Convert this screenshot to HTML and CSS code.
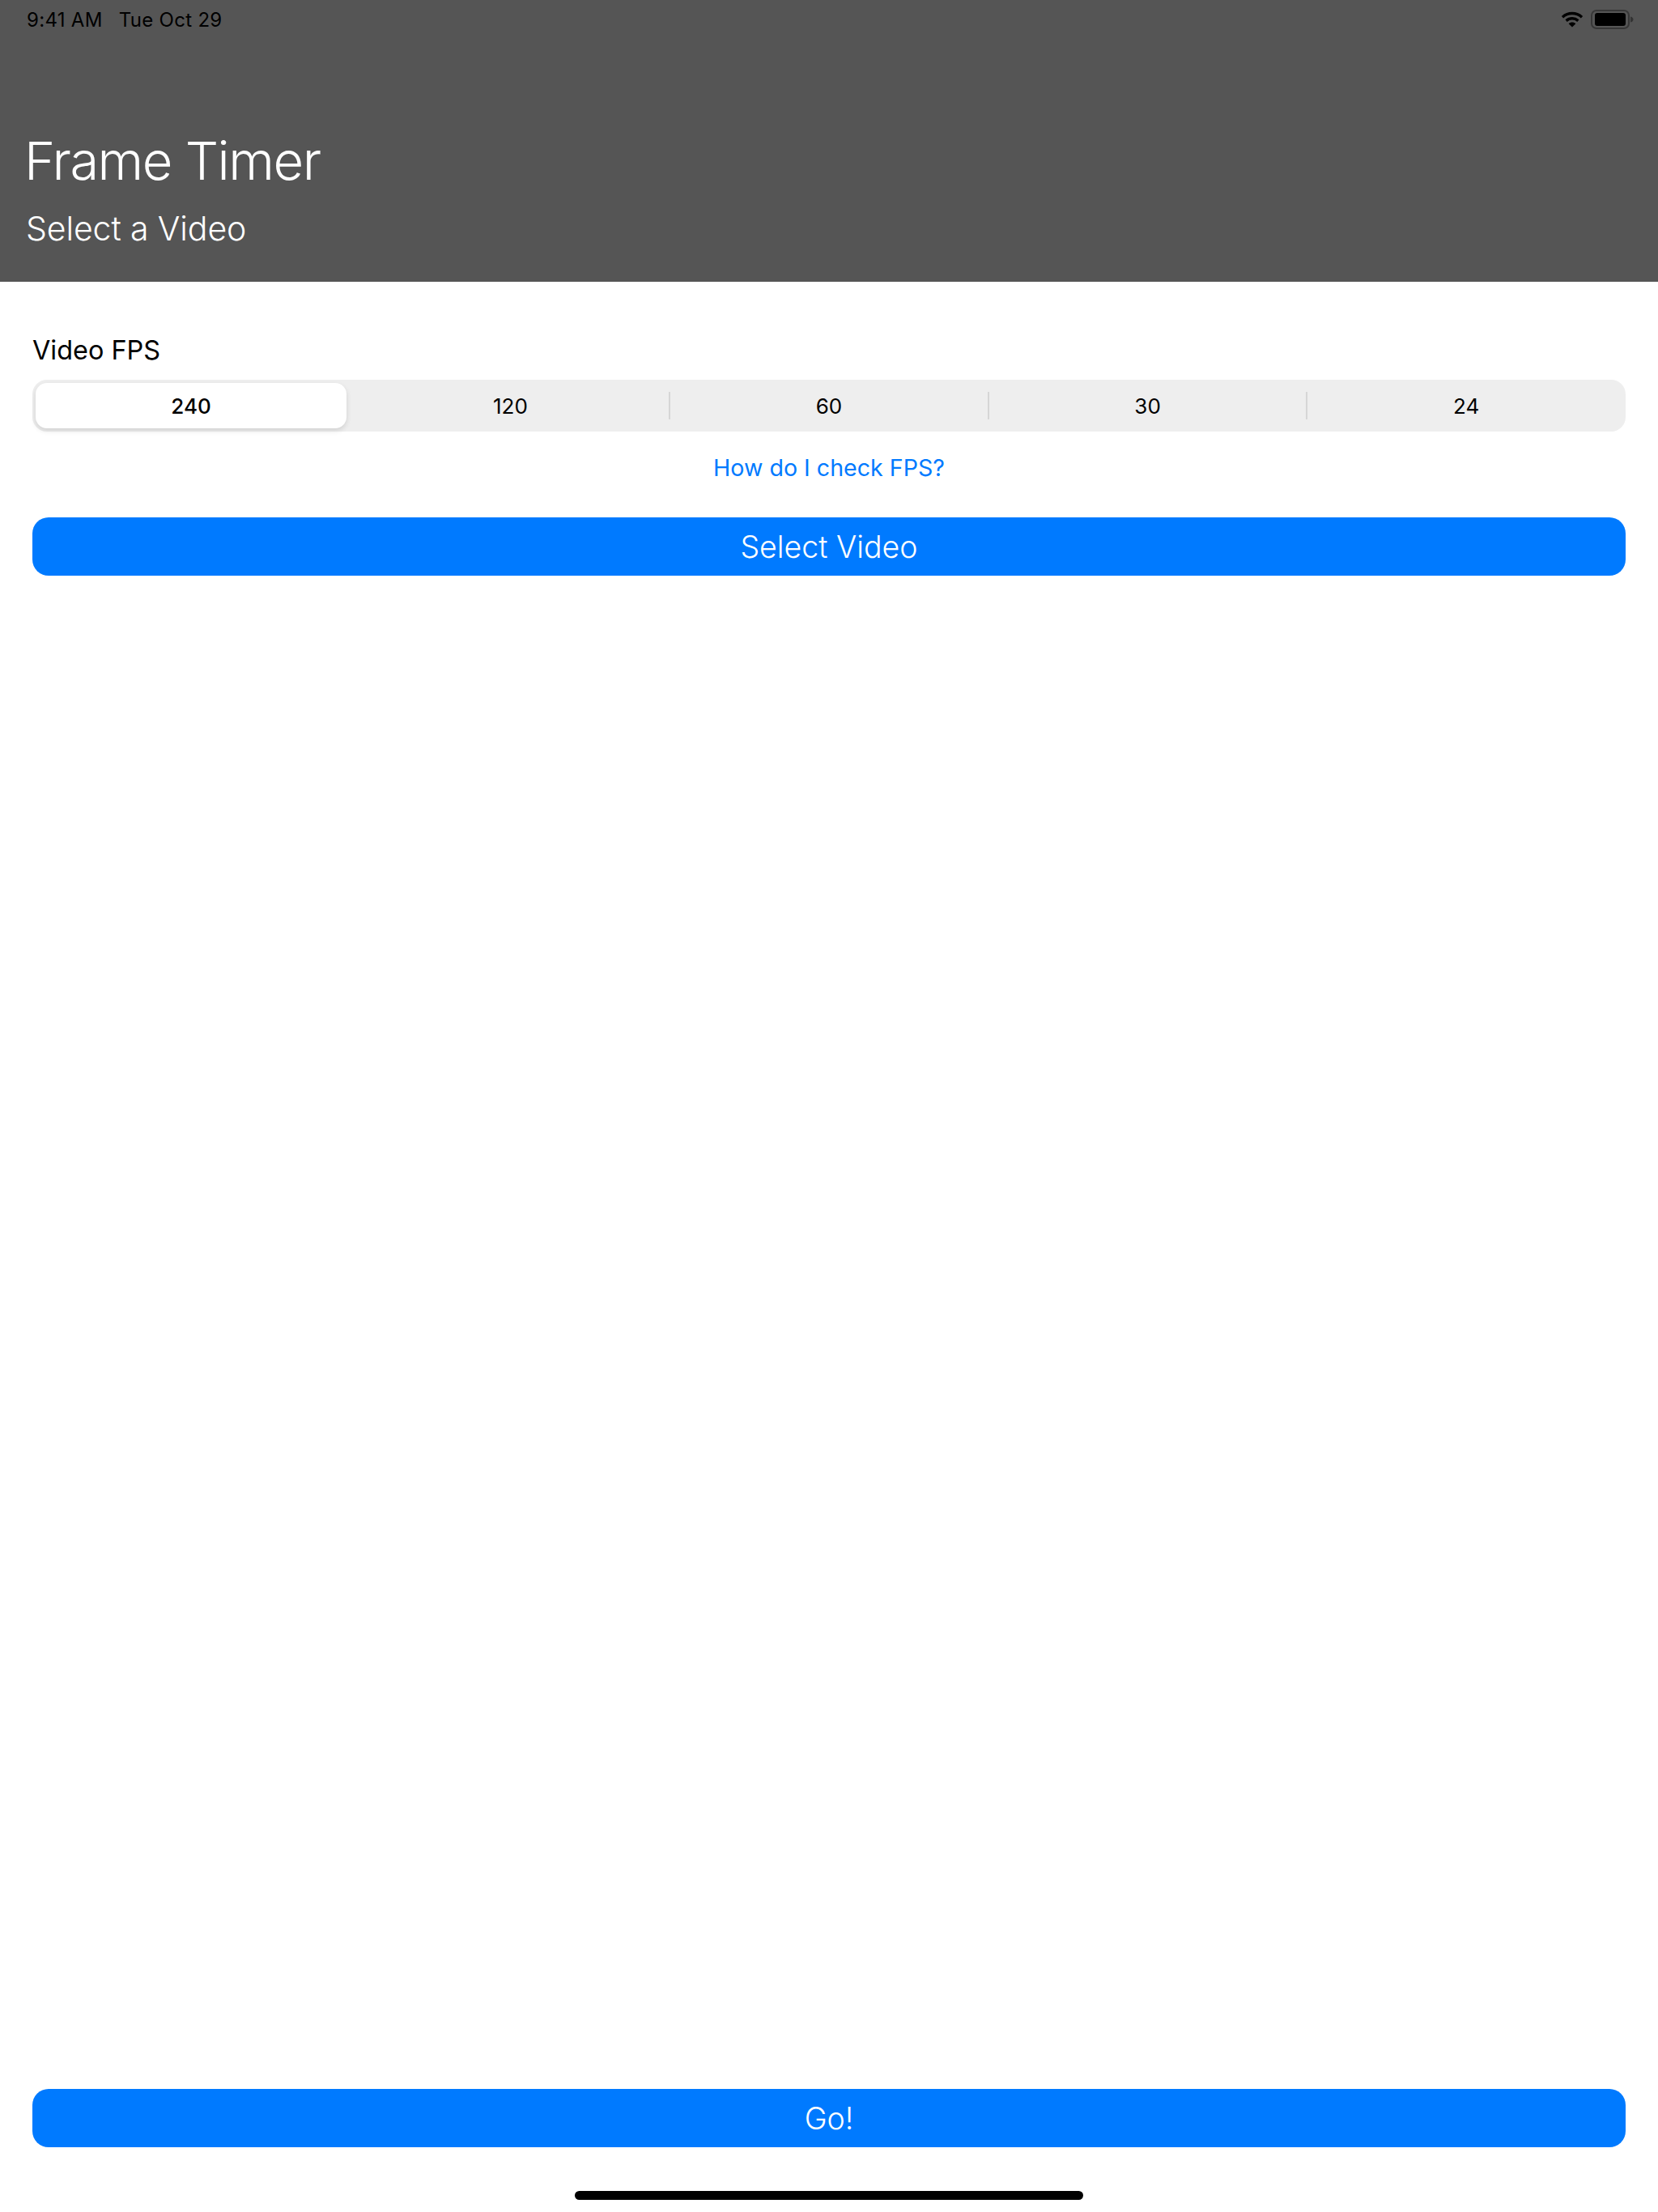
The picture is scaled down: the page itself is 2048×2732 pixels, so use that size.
FILE: index.html
```html
<!DOCTYPE html>
<html lang="en">
<head>
  <meta charset="UTF-8">
  <meta name="viewport" content="width=device-width, initial-scale=1.0">
  <title>Frame Timer</title>
  <link rel="stylesheet" href="styles.css">
</head>
<body>
  <div class="page">
    <header class="top-bar">
      <div class="status-bar">
        <span class="status-time">9:41 AM</span>
        <span class="status-date">Tue Oct 29</span>
        <div class="status-icons">
          <svg class="wifi-icon" width="28" height="20" viewBox="0 0 28 20">
            <path d="M2 7.2C9 1 19 1 26 7.2" fill="none" stroke="#000" stroke-width="3.4"/>
            <path d="M6.6 11.6C11 7.8 17 7.8 21.4 11.6" fill="none" stroke="#000" stroke-width="3.4"/>
            <path d="M9.6 15.2C12 13 16 13 18.4 15.2L14 19.6Z" fill="#000"/>
          </svg>
          <svg class="battery-icon" width="54" height="24" viewBox="0 0 54 24">
            <rect x="1" y="1" width="46" height="22" rx="6" fill="none" stroke="#000" stroke-opacity="0.35" stroke-width="2"/>
            <rect x="5" y="4" width="38" height="16" rx="3" fill="#000"/>
            <path d="M49 8.5C51.5 9 52.5 10.5 52.5 12C52.5 13.500 51.5 15 49 15.500Z" fill="#000" fill-opacity="0.4"/>
          </svg>
        </div>
      </div>
      <h1 class="app-title">Frame Timer</h1>
      <h2 class="app-subtitle">Select a Video</h2>
    </header>

    <main class="content">
      <label class="field-label">Video FPS</label>
      <div class="segments">
        <div class="segment selected">240</div>
        <div class="segment">120</div>
        <div class="segment divided">60</div>
        <div class="segment divided">30</div>
        <div class="segment divided">24</div>
      </div>
      <a class="help-link" href="#">How do I check FPS?</a>
      <button class="primary-btn">Select Video</button>
    </main>

    <footer class="bottom">
      <button class="primary-btn">Go!</button>
      <div class="home-bar"></div>
    </footer>
  </div>
</body>
</html>
```
FILE: styles.css
```css
* {
  margin: 0;
  padding: 0;
  box-sizing: border-box;
  font-family: 'Inter', 'Liberation Sans', sans-serif;
}

body {
  background-color: #fff;
  color: #000;
}

.page {
  display: flex;
  flex-direction: column;
  height: 2732px;
}

.top-bar {
  height: 348px;
  background-color: #555;
  color: #fff;
  padding: 0 33px;
}

.status-bar {
  display: flex;
  align-items: center;
  height: 48px;
  color: #000;
  font-size: 24px;
  letter-spacing: 0.3px;
}

.status-date {
  margin-left: 20px;
}

.status-icons {
  display: flex;
  align-items: center;
  gap: 9px;
  margin-left: auto;
  margin-right: -4px;
}

.wifi-icon,
.battery-icon {
  display: block;
}

.app-title {
  margin-top: 112px;
  margin-left: -3px;
  font-size: 65px;
  line-height: 78px;
  font-weight: 300;
  letter-spacing: -1.5px;
}

.app-subtitle {
  margin-top: 19px;
  margin-left: -1px;
  font-size: 41px;
  line-height: 50px;
  font-weight: 300;
  letter-spacing: -0.1px;
}

.content {
  display: flex;
  flex-direction: column;
  padding: 0 40px;
}

.field-label {
  margin-top: 64px;
  font-size: 32.4px;
  line-height: 42px;
}

.segments {
  display: grid;
  grid-template-columns: repeat(5, 1fr);
  height: 64px;
  margin-top: 15px;
  background-color: #eee;
  border-radius: 18px;
}

.segment {
  display: flex;
  align-items: center;
  justify-content: center;
  position: relative;
  font-size: 26px;
}

.segment.selected {
  margin: 4px 5.6px 4px 4px;
  background-color: #fff;
  border-radius: 14px;
  font-weight: 500;
  box-shadow: 0 3px 6px rgba(0,0,0,0.12);
}

.segment.divided::before {
  content: "";
  position: absolute;
  left: -1px;
  top: 15px;
  bottom: 15px;
  width: 2px;
  background-color: #d6d6d6;
}

.help-link {
  margin-top: 26px;
  color: #007aff;
  font-size: 28.6px;
  line-height: 38px;
  text-align: center;
  text-decoration: none;
}

.primary-btn {
  width: 100%;
  height: 72px;
  background-color: #007aff;
  color: #fff;
  border: none;
  border-radius: 20px;
  font-size: 37.5px;
  font-weight: 300;
}

.content .primary-btn {
  margin-top: 42px;
}

.bottom {
  display: flex;
  flex-direction: column;
  align-items: center;
  margin-top: auto;
  padding: 0 40px 15px;
}

.home-bar {
  width: 628px;
  height: 11px;
  margin-top: 54px;
  background-color: #000;
  border-radius: 6px;
}
```
